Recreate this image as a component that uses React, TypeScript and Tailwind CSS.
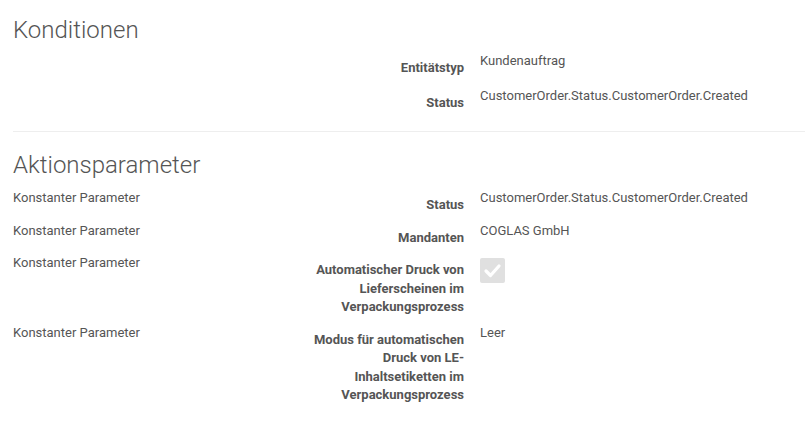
import React from "react";

type Row = { left?: string; label: string; value?: string; checkbox?: boolean };

const kond: Row[] = [
  { label: "Entitätstyp", value: "Kundenauftrag" },
  { label: "Status", value: "CustomerOrder.Status.CustomerOrder.Created" },
];

const akt: Row[] = [
  { left: "Konstanter Parameter", label: "Status", value: "CustomerOrder.Status.CustomerOrder.Created" },
  { left: "Konstanter Parameter", label: "Mandanten", value: "COGLAS GmbH" },
  { left: "Konstanter Parameter", label: "Automatischer Druck von Lieferscheinen im Verpackungsprozess", checkbox: true },
  { left: "Konstanter Parameter", label: "Modus für automatischen Druck von LE-Inhaltsetiketten im Verpackungsprozess", value: "Leer" },
];

function FormRow({ r, mb }: { r: Row; mb: string }) {
  return (
    <div className={"flex " + mb}>
      <div className="w-[287px] shrink-0">{r.left}</div>
      <div className="w-[164px] shrink-0 text-right font-bold pt-[7px]">{r.label}</div>
      <div className="flex-1 pl-[16px]">
        {r.checkbox ? (
          <div className="mt-[4px] w-[25px] h-[25px] rounded-[2px] bg-[#e0e0e0] flex items-center justify-center">
            <svg width="19" height="19" viewBox="0 0 19 19">
              <path d="M3 10 L7.5 14.5 L16 5" fill="none" stroke="#ffffff" strokeWidth="3.2" strokeLinecap="round" strokeLinejoin="round" />
            </svg>
          </div>
        ) : (
          r.value
        )}
      </div>
    </div>
  );
}

export default function App() {
  return (
    <div
      className="w-[805px] h-[425px] bg-white pl-[13px] text-[13px] leading-[18.57px] text-[#555] overflow-hidden"
      style={{ fontFamily: "Roboto, 'Noto Sans', sans-serif" }}
    >
      <h3 className="text-[24px] font-light leading-[26.4px] pt-[17px] mb-[9px] text-[#555]">Konditionen</h3>
      {kond.map((r, i) => (
        <FormRow key={i} r={r} mb="mb-[9px]" />
      ))}
      <div className="mt-[18.5px] border-t border-[#eeeeee]" />
      <h3 className="text-[24px] font-light leading-[26.4px] mt-[20px] mb-[10.5px] text-[#555]">Aktionsparameter</h3>
      {akt.map((r, i) => (
        <FormRow key={i} r={r} mb="mb-[7px]" />
      ))}
    </div>
  );
}
